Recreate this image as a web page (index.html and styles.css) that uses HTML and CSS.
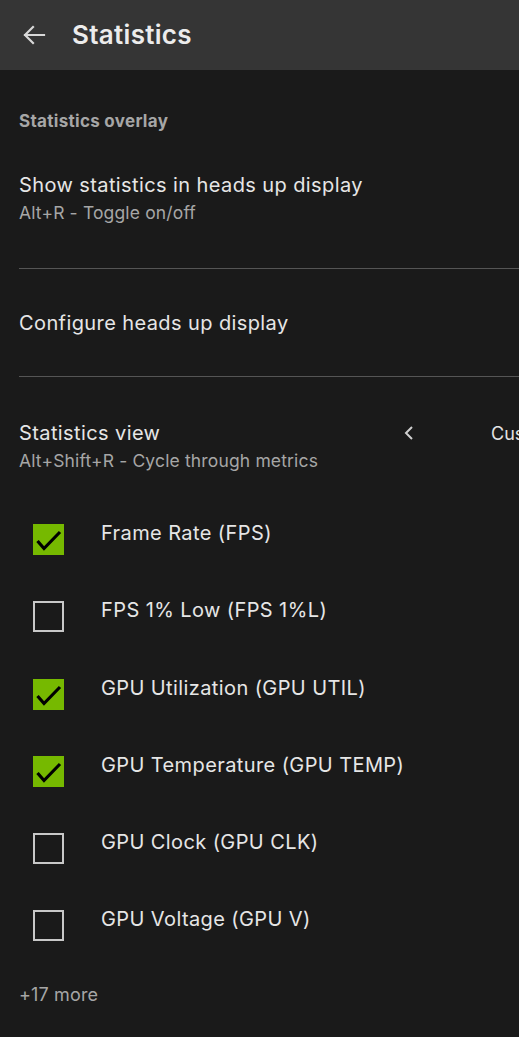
FILE: index.html
```html
<!DOCTYPE html>
<html>
<head>
<meta charset="utf-8">
<link rel="stylesheet" href="styles.css">
</head>
<body>
<header class="topbar">
  <svg class="back" width="26" height="26" viewBox="0 0 26 26"><path d="M23 13H4M12 5L4 13L12 21" fill="none" stroke="#d8d8d8" stroke-width="2.2" stroke-linecap="square"/></svg>
  <h1 class="title">Statistics</h1>
</header>
<main class="content">
  <h2 class="section-label">Statistics overlay</h2>
  <div class="setting first">
    <div class="setting-title">Show statistics in heads up display</div>
    <div class="setting-sub">Alt+R - Toggle on/off</div>
  </div>
  <div class="divider"></div>
  <div class="setting single">
    <div class="setting-title">Configure heads up display</div>
  </div>
  <div class="divider"></div>
  <div class="setting view">
    <div class="view-row">
      <div class="setting-title">Statistics view</div>
      <svg class="chev" width="12" height="16" viewBox="0 0 12 16"><path d="M9 2L3 8L9 14" fill="none" stroke="#cfcfcf" stroke-width="2"/></svg>
      <div class="view-value">Custom</div>
    </div>
    <div class="setting-sub">Alt+Shift+R - Cycle through metrics</div>
  </div>
  <ul class="metrics">
    <li class="metric"><span class="box checked"><svg width="31" height="31" viewBox="0 0 31 31"><path d="M4.5 17L11 24.5L27 8" fill="none" stroke="#000" stroke-width="3.2"/></svg></span><span class="metric-label">Frame Rate (FPS)</span></li>
    <li class="metric"><span class="box"></span><span class="metric-label">FPS 1% Low (FPS 1%L)</span></li>
    <li class="metric"><span class="box checked"><svg width="31" height="31" viewBox="0 0 31 31"><path d="M4.5 17L11 24.5L27 8" fill="none" stroke="#000" stroke-width="3.2"/></svg></span><span class="metric-label">GPU Utilization (GPU UTIL)</span></li>
    <li class="metric"><span class="box checked"><svg width="31" height="31" viewBox="0 0 31 31"><path d="M4.5 17L11 24.5L27 8" fill="none" stroke="#000" stroke-width="3.2"/></svg></span><span class="metric-label">GPU Temperature (GPU TEMP)</span></li>
    <li class="metric"><span class="box"></span><span class="metric-label">GPU Clock (GPU CLK)</span></li>
    <li class="metric"><span class="box"></span><span class="metric-label">GPU Voltage (GPU V)</span></li>
  </ul>
  <div class="more">+17 more</div>
</main>
</body>
</html>
```

FILE: styles.css
```css
html, body {
  margin: 0;
  padding: 0;
  background: #1a1a1a;
  overflow: hidden;
}
body {
  font-family: Inter, "Liberation Sans", sans-serif;
  color: #e4e4e4;
  width: 519px;
  height: 1037px;
}
.topbar {
  height: 70px;
  background: #353535;
  display: flex;
  align-items: center;
  padding-left: 21px;
  gap: 25px;
}
.back { display: block; }
.title {
  margin: 0;
  font-size: 26px;
  font-weight: 600;
  letter-spacing: 0.3px;
  color: #ececec;
  padding-bottom: 2px;
}
.content {
  padding: 0 0 0 19px;
  width: 620px;
}
.section-label {
  margin: 0;
  padding-top: 41px;
  font-size: 17px;
  font-weight: 700;
  letter-spacing: 0.3px;
  color: #a6a6a6;
  line-height: 20px;
}
.setting-title {
  font-size: 20px;
  line-height: 24px;
  letter-spacing: 0.4px;
  color: #e6e6e6;
}
.setting-sub {
  font-size: 17.5px;
  line-height: 20px;
  letter-spacing: 0.15px;
  color: #a6a6a6;
  margin-top: 6px;
}
.setting.first { padding-top: 42px; padding-bottom: 45px; }
.setting.single { padding: 42px 0 41px; }
.setting.view { padding-top: 44px; }
.divider {
  height: 1px;
  background: #555;
}
.view-row {
  display: flex;
  align-items: center;
}
.view-row .setting-title { width: 384px; }
.chev { display: block; }
.view-value {
  margin-left: 76px;
  font-size: 18px;
  color: #e4e4e4;
}
.metrics {
  list-style: none;
  margin: 0;
  padding: 53px 0 0 14px;
  display: flex;
  flex-direction: column;
  gap: 46.25px;
}
.metric {
  display: flex;
  align-items: flex-start;
  height: 31px;
}
.box {
  width: 27px;
  height: 27px;
  border: 2px solid #c8c8c8;
  flex: none;
  display: block;
}
.box.checked {
  width: 31px;
  height: 31px;
  border: none;
  background: #76b900;
}
.box svg { display: block; }
.metric-label {
  margin-left: 37px;
  font-size: 20px;
  line-height: 20px;
  letter-spacing: 0.4px;
  margin-top: -1px;
  color: #e6e6e6;
}
.more {
  margin-top: 43px;
  font-size: 18px;
  letter-spacing: 0.15px;
  color: #a6a6a6;
}
```
